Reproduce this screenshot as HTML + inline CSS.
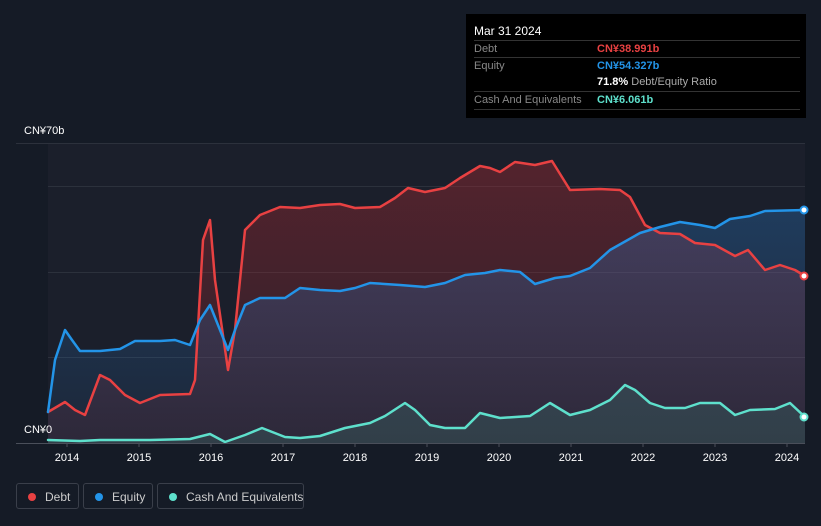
<!DOCTYPE html>
<html><head><meta charset="utf-8"><style>
body{margin:0;width:821px;height:526px;background:#151b26;font-family:"Liberation Sans","Noto Sans CJK SC",sans-serif;overflow:hidden;position:relative}
.tt{position:absolute;left:466px;top:14px;width:340px;height:104px;background:#000;color:#fff;font-size:11px}
.tt .r{position:absolute;left:8px;right:6px;border-top:1px solid #333;height:17px;line-height:17px;color:#888}
.tt .v{position:absolute;left:123px;font-weight:bold}
.lg{position:absolute;top:483px;height:26px;border:1px solid #3a3f4a;border-radius:3px;color:#ccc;font-size:12px;line-height:26px;box-sizing:border-box;white-space:nowrap}
.lg i{position:absolute;left:11px;top:9px;width:8px;height:8px;border-radius:50%}
.ax{position:absolute;color:#fff;font-size:11px}
</style></head><body>
<svg width="821" height="526" style="position:absolute;left:0;top:0">
<defs>
<linearGradient id="gd" x1="0" y1="0" x2="0" y2="1"><stop offset="0" stop-color="#b02a30" stop-opacity=".38"/><stop offset="1" stop-color="#b02a30" stop-opacity=".12"/></linearGradient>
<linearGradient id="ge" x1="0" y1="0" x2="0" y2="1"><stop offset="0" stop-color="#2a7fd0" stop-opacity=".3"/><stop offset="1" stop-color="#2a7fd0" stop-opacity=".08"/></linearGradient>
</defs>
<rect x="48" y="143" width="757" height="300" fill="#1b1f2b"/>
<g stroke="#2c313c" stroke-width="1">
<line x1="16" y1="143.5" x2="805" y2="143.5"/><line x1="48" y1="186.5" x2="805" y2="186.5"/><line x1="48" y1="272.5" x2="805" y2="272.5"/><line x1="48" y1="357.5" x2="805" y2="357.5"/>
</g>
<g stroke-linejoin="round" stroke-linecap="round">
<path fill="url(#gd)" stroke="none" d="M48,443 L48,412 65,402 75,410 85,415 100,375 110,380 125,395 140,403 160,395 190,394 195,380 203,240 210,220 215,280 228,370 235,330 245,230 260,215 280,207 300,208 320,205 340,204 355,208 380,207 395,198 408,188 425,192 445,188 460,178 480,166 490,168 500,172 515,162 535,165 552,161 570,190 600,189 620,190 630,197 645,225 660,233 680,234 695,243 715,245 735,256 748,250 765,270 780,265 795,270 805,276 805,443Z"/>
<path fill="url(#ge)" stroke="none" d="M48,443 L48,412 55,360 65,330 72,340 80,351 100,351 120,349 135,341 160,341 175,340 190,345 200,320 210,305 220,330 228,350 235,330 245,305 260,298 285,298 300,288 320,290 340,291 355,288 370,283 400,285 425,287 445,283 465,275 485,273 500,270 520,272 535,284 555,278 570,276 590,268 610,250 640,233 660,227 680,222 700,225 715,228 730,219 750,216 765,211 805,210 805,443Z"/>
<path fill="#3a6a68" fill-opacity=".35" stroke="none" d="M48,443 L48,440 80,441 100,440 150,440 190,439 210,434 225,442 245,435 262,428 285,437 300,438 320,436 345,428 370,423 385,416 405,403 415,410 430,425 445,428 465,428 480,413 500,418 530,416 550,403 570,415 590,410 610,400 625,385 635,390 650,403 665,408 685,408 700,403 720,403 735,415 750,410 775,409 790,403 805,417 805,443Z"/>
<path fill="none" stroke="#e84142" stroke-width="2.5" d="M48,412 65,402 75,410 85,415 100,375 110,380 125,395 140,403 160,395 190,394 195,380 203,240 210,220 215,280 228,370 235,330 245,230 260,215 280,207 300,208 320,205 340,204 355,208 380,207 395,198 408,188 425,192 445,188 460,178 480,166 490,168 500,172 515,162 535,165 552,161 570,190 600,189 620,190 630,197 645,225 660,233 680,234 695,243 715,245 735,256 748,250 765,270 780,265 795,270 805,276"/>
<path fill="none" stroke="#2394e8" stroke-width="2.5" d="M48,412 55,360 65,330 72,340 80,351 100,351 120,349 135,341 160,341 175,340 190,345 200,320 210,305 220,330 228,350 235,330 245,305 260,298 285,298 300,288 320,290 340,291 355,288 370,283 400,285 425,287 445,283 465,275 485,273 500,270 520,272 535,284 555,278 570,276 590,268 610,250 640,233 660,227 680,222 700,225 715,228 730,219 750,216 765,211 805,210"/>
<path fill="none" stroke="#5ee0cc" stroke-width="2.5" d="M48,440 80,441 100,440 150,440 190,439 210,434 225,442 245,435 262,428 285,437 300,438 320,436 345,428 370,423 385,416 405,403 415,410 430,425 445,428 465,428 480,413 500,418 530,416 550,403 570,415 590,410 610,400 625,385 635,390 650,403 665,408 685,408 700,403 720,403 735,415 750,410 775,409 790,403 805,417"/>
</g>
<circle cx="804" cy="210" r="3.5" fill="#fff" stroke="#2394e8" stroke-width="2"/>
<circle cx="804" cy="276" r="3.5" fill="#fff" stroke="#e84142" stroke-width="2"/>
<circle cx="804" cy="417" r="3.5" fill="#fff" stroke="#5ee0cc" stroke-width="2"/>
<line x1="16" y1="443.5" x2="805" y2="443.5" stroke="#4a4f5a"/>
<g stroke="#4a4f5a"><line x1="67" y1="443" x2="67" y2="447"/><line x1="139" y1="443" x2="139" y2="447"/><line x1="211" y1="443" x2="211" y2="447"/><line x1="283" y1="443" x2="283" y2="447"/><line x1="355" y1="443" x2="355" y2="447"/><line x1="427" y1="443" x2="427" y2="447"/><line x1="499" y1="443" x2="499" y2="447"/><line x1="571" y1="443" x2="571" y2="447"/><line x1="643" y1="443" x2="643" y2="447"/><line x1="715" y1="443" x2="715" y2="447"/><line x1="787" y1="443" x2="787" y2="447"/></g>
<g fill="#fff" font-size="11" text-anchor="middle" font-family="Liberation Sans,sans-serif">
<text x="67" y="461">2014</text><text x="139" y="461">2015</text><text x="211" y="461">2016</text><text x="283" y="461">2017</text><text x="355" y="461">2018</text><text x="427" y="461">2019</text><text x="499" y="461">2020</text><text x="571" y="461">2021</text><text x="643" y="461">2022</text><text x="715" y="461">2023</text><text x="787" y="461">2024</text>
</g>
</svg>
<div class="ax" style="left:24px;top:125px">CN¥70b</div>
<div class="ax" style="left:24px;top:424px">CN¥0</div>
<div class="tt">
<div style="position:absolute;left:8px;top:10px;font-size:12px">Mar 31 2024</div>
<div class="r" style="top:26px">Debt<span class="v" style="color:#e84142">CN¥38.991b</span></div>
<div class="r" style="top:43px">Equity<span class="v" style="color:#2394e8">CN¥54.327b</span></div>
<div class="r" style="top:60px;border-top:none"><span class="v" style="color:#fff">71.8% <span style="font-weight:normal;color:#aaa">Debt/Equity Ratio</span></span></div>
<div class="r" style="top:77px;border-bottom:1px solid #333">Cash And Equivalents<span class="v" style="color:#5ee0cc">CN¥6.061b</span></div>
</div>
<div class="lg" style="left:16px;width:63px"><i style="background:#e84142"></i><span style="position:absolute;left:28px">Debt</span></div>
<div class="lg" style="left:83px;width:70px"><i style="background:#2394e8"></i><span style="position:absolute;left:28px">Equity</span></div>
<div class="lg" style="left:157px;width:147px"><i style="background:#5ee0cc"></i><span style="position:absolute;left:28px">Cash And Equivalents</span></div>
</body></html>
